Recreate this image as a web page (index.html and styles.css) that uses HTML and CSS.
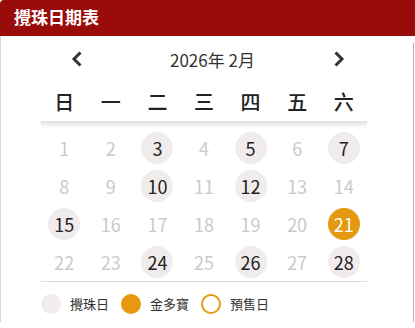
FILE: index.html
```html
<!DOCTYPE html>
<html lang="zh-Hant">
<head>
    <meta charset="UTF-8">
    <meta name="viewport" content="width=device-width, initial-scale=1.0">
    <title>攪珠日期表</title>
    <link rel="stylesheet" href="styles.css">
</head>
<body>
    <div class="card">
        <div class="head">攪珠日期表</div>
        <div class="panel">
            <div class="inner">
                <div class="nav">
                    <button class="arrow" aria-label="上月">
                        <svg width="12" height="16" viewBox="0 0 12 16"><path d="M9.5 1.5 L3 8 L9.5 14.5" /></svg>
                    </button>
                    <div class="month">2026年 2月</div>
                    <button class="arrow" aria-label="下月">
                        <svg width="12" height="16" viewBox="0 0 12 16"><path d="M2.5 1.5 L9 8 L2.5 14.5" /></svg>
                    </button>
                </div>

                <div class="cal">
                    <div class="week">
                        <span>日</span><span>一</span><span>二</span><span>三</span><span>四</span><span>五</span><span>六</span>
                    </div>
                    <div class="shade"></div>
                    <div class="days">
                        <span>1</span><span>2</span><span class="draw">3</span><span>4</span><span class="draw">5</span><span>6</span><span class="draw">7</span>
                        <span>8</span><span>9</span><span class="draw">10</span><span>11</span><span class="draw">12</span><span>13</span><span>14</span>
                        <span class="draw">15</span><span>16</span><span>17</span><span>18</span><span>19</span><span>20</span><span class="gold">21</span>
                        <span>22</span><span>23</span><span class="draw">24</span><span>25</span><span class="draw">26</span><span>27</span><span class="draw">28</span>
                    </div>
                </div>

                <div class="legend">
                    <span class="dot dot-draw"></span><span class="label">攪珠日</span>
                    <span class="dot dot-gold"></span><span class="label">金多寶</span>
                    <span class="dot dot-pre"></span><span class="label">預售日</span>
                </div>
            </div>
        </div>
    </div>
</body>
</html>
```

FILE: styles.css
```css
*{
    margin: 0;
    padding: 0;
    box-sizing: border-box;
}
body{
    font-family: "Noto Sans CJK TC", "Noto Sans", sans-serif;
    background-color: white;
    color: #222;
}
.card{
    width: 415px;
}
.head{
    height: 36px;
    line-height: 34px;
    padding-left: 14px;
    background-color: #990c0b;
    border-top-left-radius: 4px;
    color: white;
    font-size: 17px;
    font-weight: bold;
}
.panel{
    width: 414px;
    border-left: 1px solid #d6d6d6;
    padding-top: 7px;
}
.inner{
    height: 279px;
    border-right: 1px solid #b4b4b4;
}
.nav{
    display: grid;
    grid-template-columns: 20px 1fr 20px;
    align-items: center;
    width: 282px;
    height: 32px;
    margin-left: 66px;
}
.arrow{
    display: flex;
    align-items: center;
    justify-content: center;
    border: none;
    background: none;
    height: 32px;
}
.arrow path{
    fill: none;
    stroke: #333;
    stroke-width: 3;
}
.month{
    text-align: center;
    padding-left: 9px;
    font-size: 17px;
    color: #333;
}
.cal{
    width: 326px;
    margin-left: 40px;
}
.week{
    display: grid;
    grid-template-columns: repeat(7, 1fr);
    height: 46px;
    padding-top: 6px;
    align-items: center;
    text-align: center;
    font-size: 20px;
    font-weight: 500;
    color: #222;
}
.shade{
    height: 7px;
    background: linear-gradient(#dedede, #ffffff);
    margin-bottom: 1px;
}
.days{
    display: grid;
    grid-template-columns: repeat(7, 1fr);
    grid-auto-rows: 38px;
    border-bottom: 1px solid #dcdcdc;
}
.days span{
    display: flex;
    align-items: center;
    justify-content: center;
    width: 32px;
    height: 32px;
    margin: auto;
    border-radius: 50%;
    font-size: 18px;
    color: #cacaca;
}
.days .draw{
    background-color: #f1ecec;
    color: #222;
}
.days .gold{
    background-color: #e5990f;
    color: white;
}
.legend{
    display: flex;
    align-items: center;
    height: 43px;
    margin-left: 40px;
}
.dot{
    width: 20px;
    height: 20px;
    border-radius: 50%;
}
.dot-draw{
    background-color: #f1ecec;
}
.dot-gold{
    background-color: #e5990f;
}
.dot-pre{
    border: 2px solid #e5990f;
}
.label{
    font-size: 13px;
    color: #333;
    margin-left: 9px;
    margin-right: 12px;
}
```
